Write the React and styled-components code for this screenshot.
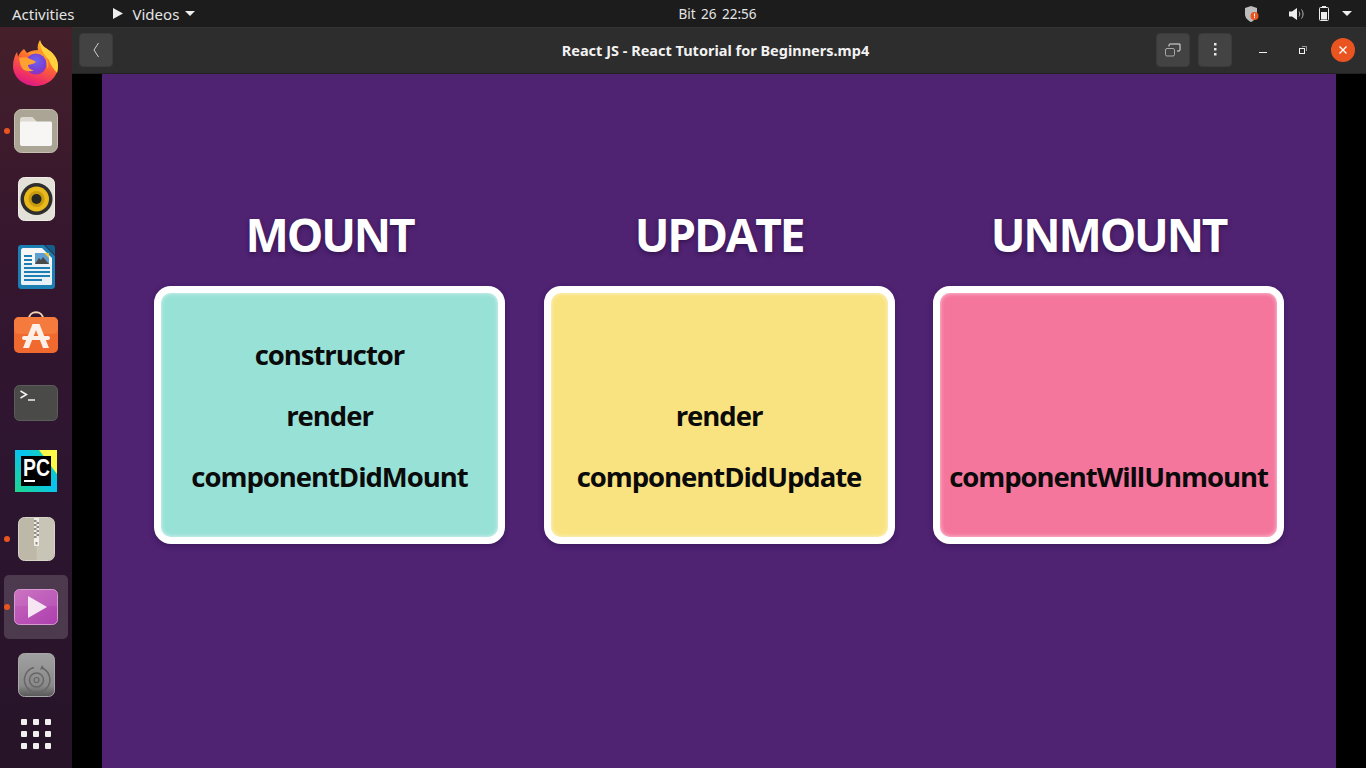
import React from "react";
import styled, { createGlobalStyle } from "styled-components";

const GlobalStyle = createGlobalStyle`
  html, body {
    margin: 0;
    padding: 0;
    height: 100%;
    overflow: hidden;
    background: #000;
  }
  #root {
    height: 100vh;
  }
`;

const Desktop = styled.div`
  width: 1366px;
  height: 768px;
  display: grid;
  grid-template-columns: 72px 1fr;
  grid-template-rows: 27px 1fr;
  font-family: "Noto Sans", "Open Sans", sans-serif;
  overflow: hidden;
`;

const TopBar = styled.div`
  grid-column: 1 / 3;
  display: grid;
  grid-template-columns: 1fr auto 1fr;
  align-items: center;
  background: #1c1c1c;
  color: #e4e4e4;
  font-size: 15px;
`;

const TopLeft = styled.div`
  display: flex;
  align-items: center;
  padding-left: 12px;
`;

const AppMenu = styled.div`
  display: flex;
  align-items: center;
  gap: 9px;
  margin-left: 37px;
`;

const Clock = styled.div`
  margin-left: 69px;
  word-spacing: 2px;
  font-size: 13.5px;
`;

const TopRight = styled.div`
  display: flex;
  align-items: center;
  justify-content: flex-end;
  padding-right: 14px;
`;

const TrayIcon = styled.svg`
  display: block;
  margin-left: ${(p) => p.$gap}px;
`;

const Dock = styled.div`
  display: flex;
  flex-direction: column;
  align-items: center;
  padding-top: 4px;
  background: linear-gradient(180deg, #45202a 0%, #35162e 30%, #2d1530 60%, #271428 100%);
`;

const DockItem = styled.div`
  position: relative;
  width: 64px;
  height: ${(p) => (p.$short ? 46 : 64)}px;
  margin-bottom: 4px;
  display: flex;
  align-items: center;
  justify-content: center;
  border-radius: 5px;
  background: ${(p) => (p.$active ? "rgba(255,255,255,0.16)" : "transparent")};
`;

const RunDot = styled.span`
  position: absolute;
  left: 0;
  top: 29px;
  width: 6px;
  height: 6px;
  border-radius: 50%;
  background: #e95420;
`;

const Main = styled.div`
  display: flex;
  flex-direction: column;
  min-width: 0;
`;

const WindowHeader = styled.div`
  height: 47px;
  box-sizing: border-box;
  display: grid;
  grid-template-columns: 1fr auto 1fr;
  align-items: center;
  padding: 0 11px 2px 7px;
  background: #2d2d2d;
  border-top: 1px solid #333;
  border-bottom: 1px solid #222;
`;

const HeaderStart = styled.div`
  display: flex;
`;

const HeaderEnd = styled.div`
  display: flex;
  align-items: center;
  justify-content: flex-end;
  gap: 8px;
`;

const WindowTitle = styled.div`
  margin-left: -3px;
  color: #f2f2f2;
  font-size: 14.5px;
  font-weight: 700;
`;

const HeadButton = styled.div`
  width: 34px;
  height: 34px;
  display: flex;
  align-items: center;
  justify-content: center;
  border-radius: 4px;
  background: #434343;
  border: 1px solid #3a3a3a;
  box-sizing: border-box;
`;

const WinButton = styled.div`
  width: 24px;
  height: 24px;
  margin-left: ${(p) => p.$gap}px;
  display: flex;
  align-items: center;
  justify-content: center;
  border-radius: 50%;
  background: ${(p) => (p.$close ? "#e95420" : "transparent")};
`;

const Letterbox = styled.div`
  flex: 1;
  display: flex;
  justify-content: center;
  background: #000;
`;

const Slide = styled.div`
  width: 1234px;
  box-sizing: border-box;
  padding: 133px 52px 0;
  background: #4f2272;
  display: grid;
  grid-template-columns: repeat(3, 351px);
  column-gap: 38.5px;
  align-content: start;
`;

const Column = styled.div`
  display: flex;
  flex-direction: column;
  align-items: center;
`;

const Heading = styled.h2`
  margin: 0 0 25px;
  height: 54px;
  line-height: 54px;
  color: #fff;
  font-family: "Open Sans", "Noto Sans", sans-serif;
  font-size: 46px;
  font-weight: 700;
  letter-spacing: -2.2px;
  white-space: nowrap;
  text-shadow: 0 2px 4px rgba(30, 10, 50, 0.55);
`;

const Card = styled.div`
  width: 351px;
  height: 258px;
  box-sizing: border-box;
  padding-top: 41px;
  border: 7px solid #fff;
  border-radius: 17px;
  background: ${(p) => p.$color};
  box-shadow: inset 0 0 4px rgba(255, 255, 255, 0.7), 0 2px 5px rgba(40, 15, 70, 0.5);
  display: flex;
  flex-direction: column;
  align-items: center;
`;

const Method = styled.div`
  height: 61px;
  line-height: 41px;
  color: #0a0a0a;
  font-family: "Open Sans", "Noto Sans", sans-serif;
  font-size: 27.5px;
  font-weight: 700;
  letter-spacing: -1.05px;
  white-space: nowrap;
`;

const Firefox = () => (
  <svg width="46" height="46" viewBox="0 0 46 46">
    <defs>
      <linearGradient id="ffOuter" x1="0.75" y1="0" x2="0.35" y2="1">
        <stop offset="0" stopColor="#ffc52e" />
        <stop offset="0.45" stopColor="#ff6f2c" />
        <stop offset="0.85" stopColor="#ee2a6a" />
        <stop offset="1" stopColor="#d81a8a" />
      </linearGradient>
      <radialGradient id="ffGlobe" cx="0.5" cy="0.35" r="0.7">
        <stop offset="0" stopColor="#6f63f0" />
        <stop offset="0.7" stopColor="#7b3ed0" />
        <stop offset="1" stopColor="#9a2cb8" />
      </radialGradient>
    </defs>
    <path d="M27 0C28 6 33 8 37 11C42 15 45 20 45 26C45 37 35 46 22.5 46C10 46 0 37 0 26C0 20 2 15 4 12L5 17C6 14 8 11 11 9L14 13C17 11 21 10 25 10C24 7 25 3 27 0Z" fill="url(#ffOuter)" />
    <path d="M27 0C28 6 33 8 37 11C42 15 45 20 45 26C45 29 44.500 31 44 33C41 29 38 26 36 20C33 16 27 12 27 0Z" fill="#ffd23d" />
    <path d="M14 14C19 11 26 11 30 14C35 18 36 24 35 29C33 23 30 17 23 15C20 14 17 14 14 14Z" fill="#ff9a2e" />
    <circle cx="23" cy="24" r="10.500" fill="url(#ffGlobe)" />
    <path d="M6 18C10 17 14 17 17 19C20 20 22 21 23 22C21 24 18 24 15 25C15 28 18 30 21 30C18 32 12 32 9 28C7 25 7 22 6 18Z" fill="#ffa032" />
  </svg>
);

const FilesIcon = () => (
  <svg width="44" height="44" viewBox="0 0 44 44">
    <rect x="0.500" y="0.500" width="43" height="43" rx="7" fill="#aba595" stroke="#c4bfb0" />
    <path d="M6 10.500C6 9 7 8 8.500 8h9c1 0 1.500.5 2 1l3.500 4H6z" fill="#dedad3" />
    <path d="M6 14c0-1 .7-1.500 1.500-1.500h29C37.300 12.500 38 13 38 14v21c0 1.200-.8 2-2 2H8c-1.200 0-2-.8-2-2z" fill="#f8f6f4" />
  </svg>
);

const SpeakerIcon = () => (
  <svg width="37" height="44" viewBox="0 0 37 44">
    <rect x="0.500" y="0.500" width="36" height="43" rx="6" fill="#e4e1d8" stroke="#f0eee8" />
    <circle cx="18.500" cy="22" r="16" fill="#2e2e2c" />
    <circle cx="18.500" cy="22" r="12.500" fill="#e9b91c" />
    <circle cx="18.500" cy="22" r="8" fill="#c99a10" />
    <circle cx="18.500" cy="22" r="5" fill="#262622" />
  </svg>
);

const WriterIcon = () => (
  <svg width="37" height="44" viewBox="0 0 37 44">
    <path d="M3 0h23l11 11v30c0 1.500-1 3-3 3H3c-2 0-3-1.500-3-3V3c0-2 1-3 3-3z" fill="#1b7fb4" />
    <path d="M27 0h7c2 0 3 1 3 3v7z" fill="#135f8c" />
    <path d="M5 3h19l10 10v25c0 1-.5 2-2 2H5c-1 0-2-1-2-2V5c0-1 1-2 2-2z" fill="#f6f6f6" />
    <path d="M3 19h31v19c0 1-.5 2-2 2H5c-1 0-2-1-2-2z" fill="#e9f1f6" />
    <path d="M6 10h8v2H6zM6 14h8v2H6zM6 18h8v2H6zM6 22h26v2H6zM6 26h26v2H6zM6 30h26v2H6zM6 34h18v2H6z" fill="#1b7fb4" />
    <rect x="17" y="8" width="14" height="11" fill="#5c9fd0" />
    <path d="M17 19l4-6 2 2 2-3 6 7z" fill="#4a4a4a" />
    <path d="M26 8h5v5z" fill="#f5c32c" />
  </svg>
);

const StoreIcon = () => (
  <svg width="44" height="48" viewBox="0 0 44 48">
    <path d="M15 8c0-9 14-9 14 0" fill="none" stroke="#f3d3b0" strokeWidth="2" />
    <rect x="0" y="6" width="44" height="36" rx="5" fill="#f0692f" />
    <rect x="0" y="6" width="44" height="17" rx="5" fill="#f47a3e" />
    <path d="M18.500 13h7L35 37h-6l-7-18-7 18H9z" fill="#fdf0e8" />
    <rect x="8" y="25" width="28" height="4" rx="2" fill="#fdf0e8" />
  </svg>
);

const TerminalIcon = () => (
  <svg width="44" height="36" viewBox="0 0 44 36">
    <rect x="0.500" y="0.500" width="43" height="35" rx="5" fill="#4a4a48" stroke="#5c5c5a" />
    <path d="M6.500 6l6 3.500-6 3.500" fill="none" stroke="#f2f2f2" strokeWidth="1.500" />
    <path d="M14 15h7" stroke="#f2f2f2" strokeWidth="1.500" />
  </svg>
);

const PyCharmIcon = () => (
  <svg width="42" height="42" viewBox="0 0 42 42">
    <defs>
      <linearGradient id="pcBg" x1="0" y1="1" x2="1" y2="0">
        <stop offset="0" stopColor="#21d789" />
        <stop offset="0.55" stopColor="#07c3f2" />
        <stop offset="1" stopColor="#21d789" />
      </linearGradient>
    </defs>
    <rect width="42" height="42" fill="url(#pcBg)" />
    <path d="M24 0h18v24z" fill="#fcf84a" />
    <rect x="6" y="6" width="30" height="30" fill="#000" />
    <text x="8" y="26" fill="#fff" fontFamily="Liberation Sans, sans-serif" fontWeight="700" fontSize="24" textLength="27" lengthAdjust="spacingAndGlyphs">PC</text>
    <rect x="9" y="30" width="11" height="2" fill="#fff" />
  </svg>
);

const ArchiveIcon = () => (
  <svg width="37" height="44" viewBox="0 0 37 44">
    <rect x="0.500" y="0.500" width="36" height="43" rx="6" fill="#bdb8a8" stroke="#d6d3c7" />
    <path d="M18.500 1H30a6 6 0 0 1 6 6v30a6 6 0 0 1-6 6H18.500z" fill="#c8c4b6" />
    <path d="M16 1h5v26h-5z" fill="#eeece6" />
    <path d="M16 3h2.500v2H16zM18.500 5H21v2h-2.500zM16 7h2.500v2H16zM18.500 9H21v2h-2.500zM16 11h2.500v2H16zM18.500 13H21v2h-2.500zM16 15h2.500v2H16zM18.500 17H21v2h-2.500zM16 19h2.500v2H16z" fill="#8f8b80" />
    <rect x="16" y="22" width="5" height="7" rx="1" fill="#f4f2ec" />
    <rect x="17.500" y="25" width="2" height="2.500" fill="#8f8b80" />
  </svg>
);

const VideosIcon = () => (
  <svg width="44" height="36" viewBox="0 0 44 36">
    <defs>
      <linearGradient id="vidBg" x1="0" y1="0" x2="1" y2="1">
        <stop offset="0" stopColor="#c868be" />
        <stop offset="1" stopColor="#ad3faf" />
      </linearGradient>
    </defs>
    <rect x="0.500" y="0.500" width="43" height="35" rx="5" fill="url(#vidBg)" stroke="#d69ad0" />
    <path d="M1 17V6a5 5 0 0 1 5-5h32a5 5 0 0 1 5 5v11z" fill="#fff" opacity="0.07" />
    <path d="M14 7L33 18 14 29z" fill="#f6e6f4" />
  </svg>
);

const DiscIcon = () => (
  <svg width="37" height="44" viewBox="0 0 37 44">
    <defs>
      <linearGradient id="discBg" x1="0" y1="0" x2="0" y2="1">
        <stop offset="0" stopColor="#a0a0a0" />
        <stop offset="0.75" stopColor="#8a8a8a" />
        <stop offset="1" stopColor="#565656" />
      </linearGradient>
    </defs>
    <rect x="0.500" y="0.500" width="36" height="43" rx="6" fill="url(#discBg)" stroke="#a8a8a8" />
    <path d="M25 15.500A12.700 12.700 0 1 1 16 14.500" fill="none" stroke="#666" strokeWidth="1.500" />
    <path d="M24 12l2.500 4-4.500.5z" fill="#666" />
    <circle cx="18.500" cy="27" r="7" fill="none" stroke="#666" strokeWidth="1.500" />
    <circle cx="18.500" cy="27" r="2.500" fill="none" stroke="#666" strokeWidth="1.200" />
  </svg>
);

const AppGrid = () => (
  <svg width="32" height="32" viewBox="0 0 32 32" fill="#f2f0ee">
    {[0, 12, 24].map((y) =>
      [0, 12, 24].map((x) => <rect key={`${x}-${y}`} x={x + 1} y={y + 1} width="6" height="6" rx="1" />)
    )}
  </svg>
);

const dockApps = [
  { id: "firefox", icon: <Firefox /> },
  { id: "files", icon: <FilesIcon />, running: true },
  { id: "rhythmbox", icon: <SpeakerIcon /> },
  { id: "writer", icon: <WriterIcon /> },
  { id: "software", icon: <StoreIcon /> },
  { id: "terminal", icon: <TerminalIcon /> },
  { id: "pycharm", icon: <PyCharmIcon /> },
  { id: "archive", icon: <ArchiveIcon />, running: true },
  { id: "videos", icon: <VideosIcon />, running: true, active: true },
  { id: "disc", icon: <DiscIcon /> },
];

const columns = [
  { title: "MOUNT", color: "#98e1d7", methods: ["constructor", "render", "componentDidMount"] },
  { title: "UPDATE", color: "#f9e380", methods: ["", "render", "componentDidUpdate"] },
  { title: "UNMOUNT", color: "#f5769d", methods: ["", "", "componentWillUnmount"] },
];

export default function App() {
  return (
    <Desktop>
      <GlobalStyle />
      <TopBar>
        <TopLeft>
          <span>Activities</span>
          <AppMenu>
            <svg width="12" height="13" viewBox="0 0 12 13"><path d="M1 1l10 5.500L1 12z" fill="#eee" /></svg>
            <span>Videos</span>
            <svg width="10" height="6" viewBox="0 0 10 6" style={{ marginLeft: -3 }}><path d="M0 0h10L5 5z" fill="#eee" /></svg>
          </AppMenu>
        </TopLeft>
        <Clock>Bit 26 22:56</Clock>
        <TopRight>
          <TrayIcon $gap={0} width="15" height="16" viewBox="0 0 15 16">
            <path d="M1 2l6-2 6 2v6c0 4-3 6.500-6 8-3-1.500-6-4-6-8z" fill="#bdbdbd" />
            <circle cx="10.500" cy="10" r="4" fill="#e95420" />
            <rect x="10" y="7.500" width="1" height="3" fill="#fff" />
            <rect x="10" y="11.200" width="1" height="1" fill="#fff" />
          </TrayIcon>
          <TrayIcon $gap={30} width="15" height="14" viewBox="0 0 15 14">
            <path d="M0 4.500h3L8 1v12L3 9.500H0z" fill="#eee" />
            <path d="M10 4.500c1 1.500 1 3.500 0 5M12.500 2.500c2 2.500 2 6.500 0 9" fill="none" stroke="#bbb" strokeWidth="1" />
          </TrayIcon>
          <TrayIcon $gap={15} width="10" height="15" viewBox="0 0 10 15">
            <rect x="3" y="0" width="4" height="1.500" fill="#eee" />
            <rect x="0.500" y="1.500" width="9" height="13" rx="1" fill="none" stroke="#eee" />
            <rect x="2" y="6" width="6" height="7.500" fill="#eee" />
          </TrayIcon>
          <TrayIcon $gap={13} width="10" height="6" viewBox="0 0 10 6">
            <path d="M0 0h10L5 5z" fill="#eee" />
          </TrayIcon>
        </TopRight>
      </TopBar>

      <Dock>
        {dockApps.map((app) => (
          <DockItem key={app.id} $active={app.active}>
            {app.running && <RunDot />}
            {app.icon}
          </DockItem>
        ))}
        <DockItem $short>
          <AppGrid />
        </DockItem>
      </Dock>

      <Main>
        <WindowHeader>
          <HeaderStart>
            <HeadButton>
              <svg width="8" height="16" viewBox="0 0 8 16"><path d="M6.500 1L2 8l4.500 7" fill="none" stroke="#cfcfcf" strokeWidth="1" /></svg>
            </HeadButton>
          </HeaderStart>
          <WindowTitle>React JS - React Tutorial for Beginners.mp4</WindowTitle>
          <HeaderEnd>
            <HeadButton>
              <svg width="16" height="14" viewBox="0 0 16 14" fill="none">
                <path d="M4 3.500V2a1 1 0 0 1 1-1h10v6a1 1 0 0 1-1 1h-2" stroke="#e6e6e6" strokeWidth="1" />
                <rect x="0.500" y="5.500" width="9" height="7.500" rx="1.500" stroke="#a8a8a8" strokeWidth="1" />
              </svg>
            </HeadButton>
            <HeadButton>
              <svg width="3" height="13" viewBox="0 0 3 13" fill="#e6e6e6">
                <rect width="2.500" height="2.500" />
                <rect y="5" width="2.500" height="2.500" />
                <rect y="10" width="2.500" height="2.500" />
              </svg>
            </HeadButton>
            <WinButton $gap={11}>
              <svg width="8" height="8" viewBox="0 0 8 8"><rect y="6" width="8" height="1" fill="#eee" /></svg>
            </WinButton>
            <WinButton $gap={8}>
              <svg width="8" height="8" viewBox="0 0 8 8" fill="none">
                <rect x="0.500" y="2.500" width="5" height="5" stroke="#f2f2f2" strokeWidth="1" />
                <path d="M3 0.500h4.500V5" stroke="#999" strokeWidth="1" />
              </svg>
            </WinButton>
            <WinButton $gap={8} $close>
              <svg width="10" height="10" viewBox="0 0 10 10"><path d="M1.500 1.500l7 7M8.500 1.500l-7 7" stroke="#fff" strokeWidth="1.300" /></svg>
            </WinButton>
          </HeaderEnd>
        </WindowHeader>
        <Letterbox>
          <Slide>
            {columns.map((col) => (
              <Column key={col.title}>
                <Heading>{col.title}</Heading>
                <Card $color={col.color}>
                  {col.methods.map((m, i) => (
                    <Method key={i}>{m}</Method>
                  ))}
                </Card>
              </Column>
            ))}
          </Slide>
        </Letterbox>
      </Main>
    </Desktop>
  );
}
